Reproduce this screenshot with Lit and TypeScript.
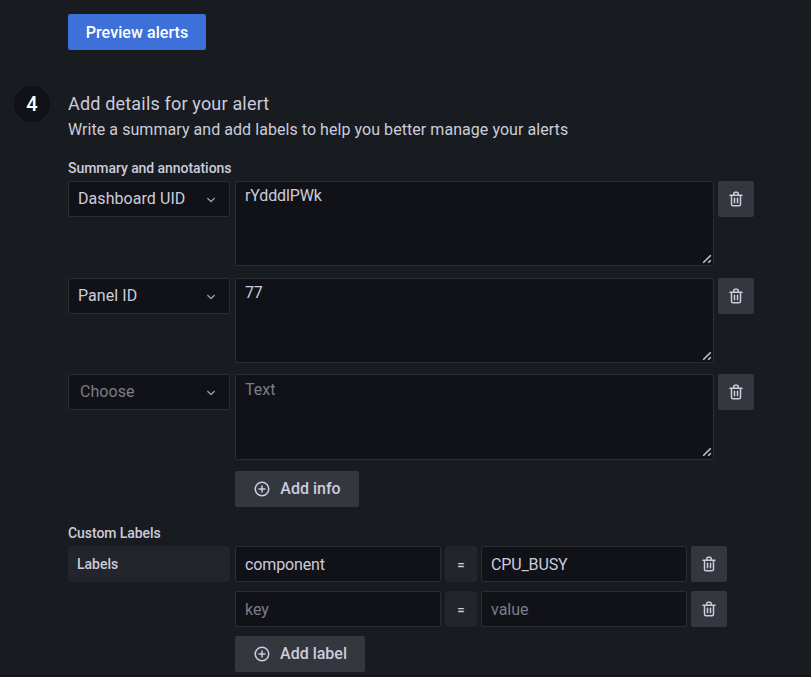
import { LitElement, html, svg, css } from "lit";
import { customElement, property } from "lit/decorators.js";
import { classMap } from "lit/directives/class-map.js";

const ICONS: Record<string, string> = {
  trash:
    "M10,18a1,1,0,0,0,1-1V11a1,1,0,0,0-2,0v6A1,1,0,0,0,10,18ZM20,6H16V5a3,3,0,0,0-3-3H11A3,3,0,0,0,8,5V6H4A1,1,0,0,0,4,8H5V19a3,3,0,0,0,3,3h8a3,3,0,0,0,3-3V8h1a1,1,0,0,0,0-2ZM10,5a1,1,0,0,1,1-1h2a1,1,0,0,1,1,1V6H10Zm7,14a1,1,0,0,1-1,1H8a1,1,0,0,1-1-1V8H17Zm-3-1a1,1,0,0,0,1-1V11a1,1,0,0,0-2,0v6A1,1,0,0,0,14,18Z",
  plus:
    "M12,2A10,10,0,1,0,22,12,10,10,0,0,0,12,2Zm0,18a8,8,0,1,1,8-8A8,8,0,0,1,12,20Zm4-9H13V8a1,1,0,0,0-2,0v3H8a1,1,0,0,0,0,2h3v3a1,1,0,0,0,2,0V13h3a1,1,0,0,0,0-2Z",
  down:
    "M17,9.17a1,1,0,0,0-1.41,0L12,12.71,8.46,9.17a1,1,0,0,0-1.41,0,1,1,0,0,0,0,1.42l4.24,4.24a1,1,0,0,0,1.42,0L17,10.59A1,1,0,0,0,17,9.17Z",
};

@customElement("ui-icon")
class UiIcon extends LitElement {
  @property() name = "";
  static styles = css`
    :host { display: block; width: 18px; height: 18px; flex: none; }
    svg { display: block; width: 100%; height: 100%; fill: currentColor; }
  `;
  render() {
    return html`<svg viewBox="0 0 24 24">${svg`<path d=${ICONS[this.name]}></path>`}</svg>`;
  }
}

interface Entry { key?: string; value?: string; }

@customElement("app-root")
class AppRoot extends LitElement {
  private annotations: Entry[] = [
    { key: "Dashboard UID", value: "rYdddlPWk" },
    { key: "Panel ID", value: "77" },
    {},
  ];
  private labels: Entry[] = [{ key: "component", value: "CPU_BUSY" }, {}];

  static styles = css`
    :host {
      display: flex;
      flex-direction: column;
      justify-content: space-between;
      box-sizing: border-box;
      height: 677px;
      overflow: hidden;
      background: #181b1f;
      color: #ccccdc;
      font: 400 16px/24px Roboto, sans-serif;
    }
    *, *::before { box-sizing: border-box; }
    .page { padding: 14px 0 0 14px; }
    .step { display: grid; grid-template-columns: 36px 1fr; column-gap: 18px; }
    .preview { margin: 0 0 36px 54px; }
    button {
      display: flex;
      align-items: center;
      justify-content: center;
      height: 36px;
      padding: 0 18px;
      border: 0;
      border-radius: 2px;
      background: #35373e;
      color: #ccccdc;
      font: 500 16px/36px Roboto, sans-serif;
    }
    button.primary {
      width: 138px;
      padding: 2px 0 0;
      background: #3d71d9;
      color: #fff;
      letter-spacing: 0.07px;
    }
    button.icon { width: 36px; padding: 0; flex: none; }
    button.add { gap: 9px; padding: 0; }
    .info { width: 124px; margin-left: 167px; }
    .label { width: 130px; }
    .number {
      width: 36px;
      height: 36px;
      border-radius: 50%;
      background: #111217;
      color: #fff;
      font-size: 20px;
      font-weight: 500;
      line-height: 36px;
      text-align: center;
    }
    h3 { margin: 6px 0 0; font-size: 18px; font-weight: 400; line-height: 24px; letter-spacing: 0.18px; }
    p { margin: 2px 0 17px; line-height: 24px; letter-spacing: 0.055px; }
    h4 { margin: 0; font-size: 14px; font-weight: 500; line-height: 18px; height: 22px; letter-spacing: -0.06px; }
    .annotations { margin-bottom: 17px; }
    .annotation { display: flex; align-items: flex-start; height: 96.7px; }
    .select {
      display: flex;
      align-items: center;
      justify-content: space-between;
      width: 162px;
      height: 36px;
      margin-right: 5px;
      padding: 0 9px;
      border: 1px solid #2c2d33;
      border-radius: 2px;
      background: #111217;
      letter-spacing: 0.06px;
    }
    .select.empty { color: #7b7c87; padding-left: 11px; }
    .select ui-icon { color: #9696a3; margin-top: 2px; }
    .area { position: relative; width: 479px; height: 85.4px; margin-right: 4px; }
    textarea, input {
      display: block;
      margin: 0;
      border: 1px solid #2c2d33;
      border-radius: 2px;
      outline: 0;
      background: #111217;
      color: #ccccdc;
      font: 400 16px/24px Roboto, sans-serif;
      letter-spacing: -0.12px;
    }
    textarea { width: 100%; height: 100%; padding: 2.2px 9px; resize: none; overflow: hidden; }
    input { width: 206px; height: 36px; padding: 0 9px; }
    ::placeholder { color: #7b7c87; opacity: 1; letter-spacing: 0; }
    .grip { position: absolute; right: 2px; bottom: 2.5px; width: 10px; height: 10px; }
    .custom { display: grid; grid-template-columns: 162px 1fr; column-gap: 5px; align-items: start; }
    .caption, .equals {
      height: 36px;
      border-radius: 4px;
      background: #22252b;
      font-size: 14px;
      font-weight: 500;
      line-height: 36px;
    }
    .caption { padding-left: 9px; }
    .equals { width: 32px; font-size: 13px; font-weight: 700; line-height: 37px; text-align: center; }
    .rows { display: flex; flex-direction: column; gap: 9px; }
    .pair { display: flex; gap: 4px; }
    .footer { height: 2px; background: #15141a; }
  `;

  private remove() {
    return html`<button class="icon" aria-label="Delete"><ui-icon name="trash"></ui-icon></button>`;
  }

  render() {
    return html`
      <div class="page">
        <button class="primary preview">Preview alerts</button>
        <section class="step">
          <div class="number">4</div>
          <div>
            <h3>Add details for your alert</h3>
            <p>Write a summary and add labels to help you better manage your alerts</p>
            <h4>Summary and annotations</h4>
            <div class="annotations">
              ${this.annotations.map(
                (a) => html`<div class="annotation">
                  <div class=${classMap({ select: true, empty: !a.key })}>
                    <span>${a.key ?? "Choose"}</span><ui-icon name="down"></ui-icon>
                  </div>
                  <div class="area">
                    <textarea placeholder="Text" spellcheck="false" .value=${a.value ?? ""}></textarea>
                    <svg class="grip" viewBox="0 0 10 10" fill="none" stroke="#c4c4c8" stroke-width="1.6">
                      <path d="M1.2 8.8 8.8 1.2M6.2 8.8 8.8 6.2"></path>
                    </svg>
                  </div>
                  ${this.remove()}
                </div>`
              )}
              <button class="add info"><ui-icon name="plus"></ui-icon>Add info</button>
            </div>
            <h4>Custom Labels</h4>
            <div class="custom">
              <div class="caption">Labels</div>
              <div class="rows">
                ${this.labels.map(
                  (l) => html`<div class="pair">
                    <input placeholder="key" .value=${l.key ?? ""} />
                    <div class="equals">=</div>
                    <input placeholder="value" .value=${l.value ?? ""} />
                    ${this.remove()}
                  </div>`
                )}
                <button class="add label"><ui-icon name="plus"></ui-icon>Add label</button>
              </div>
            </div>
          </div>
        </section>
      </div>
      <div class="footer"></div>
    `;
  }
}
